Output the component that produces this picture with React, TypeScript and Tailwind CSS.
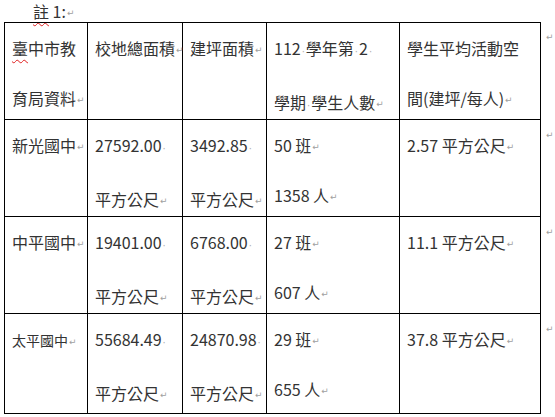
import React from 'react'

const font = { fontFamily: '"Noto Sans CJK TC", "Noto Sans", sans-serif' }
const markFont = { fontFamily: '"DejaVu Sans", sans-serif' }

// paragraph mark and space dot, Word-style formatting marks
function Mark() {
  return <span className="ml-[1px] align-middle text-[9px] leading-none text-[#a0a0a0]" style={markFont}>↵</span>
}
function Dot() {
  return <span className="px-[1px] text-[10px] text-[#b0b0b0]" style={markFont}>·</span>
}

type Cell = React.ReactNode

const rows: Cell[][] = [
  [
    <>
      <span className="underline decoration-wavy decoration-[#e02020] decoration-1 underline-offset-4">臺</span>中市教
      <br />育局資料<Mark />
    </>,
    <>校地總面積<Mark /></>,
    <>建坪面積<Mark /></>,
    <>
      112<Dot />學年第<Dot />2<Dot />
      <br />學期<Dot />學生人數<Mark />
    </>,
    <>
      學生平均活動空
      <br />間(建坪/每人)<Mark />
    </>,
  ],
  [
    <>新光國中<Mark /></>,
    <>27592.00<Dot /><br />平方公尺<Mark /></>,
    <>3492.85<Dot /><br />平方公尺<Mark /></>,
    <>50 班<Mark /><br />1358 人<Mark /></>,
    <>2.57 平方公尺<Mark /></>,
  ],
  [
    <>中平國中<Mark /></>,
    <>19401.00<Dot /><br />平方公尺<Mark /></>,
    <>6768.00<Dot /><br />平方公尺<Mark /></>,
    <>27 班<Mark /><br />607 人<Mark /></>,
    <>11.1 平方公尺<Mark /></>,
  ],
  [
    <span className="text-[14px]">太平國中<Mark /></span>,
    <>55684.49<Dot /><br />平方公尺<Mark /></>,
    <>24870.98<Dot /><br />平方公尺<Mark /></>,
    <>29 班<Mark /><br />655 人<Mark /></>,
    <>37.8 平方公尺<Mark /></>,
  ],
]

export default function App() {
  return (
    <div className="h-[417px] w-[555px] overflow-hidden bg-white text-[#333]" style={font}>
      <div className="h-[22px] pl-[33px] text-[16px] leading-[22px]">
        <span className="underline decoration-wavy decoration-[#e02020] decoration-1 underline-offset-4">註</span> 1:<Mark />
      </div>
      <div className="flex pl-[4px]">
        <div className="grid grid-cols-[84px_95px_84px_133px_141px] grid-rows-[98px_97px_97px_100px] text-[16px] leading-[50px]">
          {rows.map((row, r) =>
            row.map((cell, c) => (
              <div
                key={`${r}-${c}`}
                className={`whitespace-nowrap border-b border-r border-black pl-[7px] ${c === 0 ? 'border-l' : ''} ${r === 0 ? 'border-t' : ''}`}
              >
                {cell}
              </div>
            ))
          )}
        </div>
        <div className="grid grid-rows-[98px_97px_97px_100px] pl-[4px]">
          {rows.map((_, r) => (
            <div key={r} className="pt-[5px] leading-none">
              <Mark />
            </div>
          ))}
        </div>
      </div>
    </div>
  )
}
